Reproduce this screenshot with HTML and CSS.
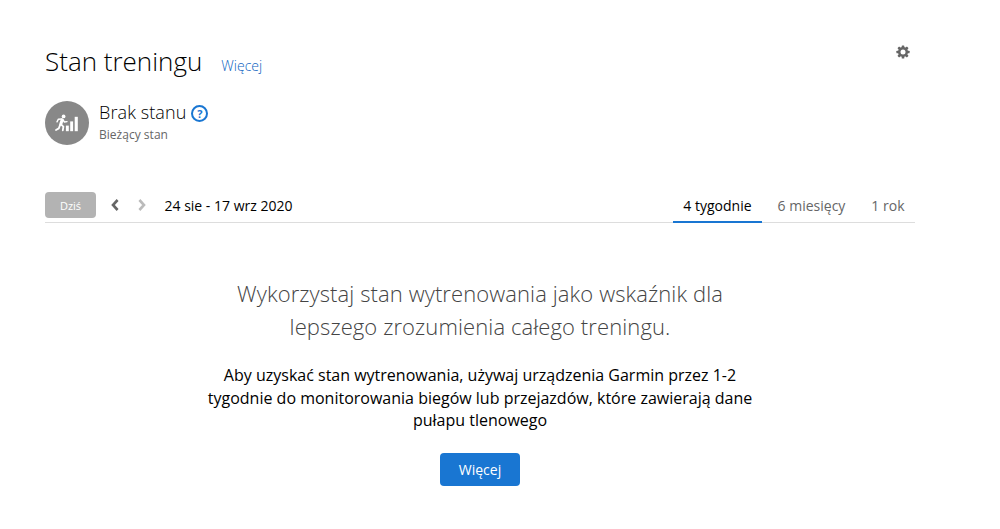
FILE: index.html
```
<!DOCTYPE html>
<html lang="pl">
	<head>
		<meta charset="UTF-8">
		<title>Stan treningu</title>
		<link rel="stylesheet" href="styles.css">
	</head>
	<body>
		<div class="page">
			<div class="header">
				<h1 class="title">Stan treningu</h1>
				<a href="#" class="more-link">Więcej</a>
				<svg class="gear" viewBox="0 0 14 14">
					<g fill="#666">
						<rect x="5.7" y="0.4" width="2.6" height="13.2" rx="0.6"/>
						<rect x="5.7" y="0.4" width="2.6" height="13.2" rx="0.6" transform="rotate(45 7 7)"/>
						<rect x="5.7" y="0.4" width="2.6" height="13.2" rx="0.6" transform="rotate(90 7 7)"/>
						<rect x="5.7" y="0.4" width="2.6" height="13.2" rx="0.6" transform="rotate(135 7 7)"/>
						<circle cx="7" cy="7" r="5"/>
					</g>
					<circle cx="7" cy="7" r="2.5" fill="#fff"/>
				</svg>
			</div>
			<div class="status">
				<svg class="status-icon" viewBox="0 0 44 44">
					<circle cx="22" cy="22" r="22" fill="#888"/>
					<circle cx="18.6" cy="15.4" r="1.9" fill="#fff"/>
					<g fill="none" stroke="#fff" stroke-linecap="round" stroke-linejoin="round">
						<path d="M17.2 18.8L15.8 23" stroke-width="3"/>
						<path d="M16.6 18L13.4 18.2L12 20.8" stroke-width="1.4"/>
						<path d="M18 18.8L19.4 21L22 20.6" stroke-width="1.4"/>
						<path d="M16 23.4L18.4 25.6L17.8 29.4" stroke-width="1.8"/>
						<path d="M15.2 23.6L13.8 27.4L11 29" stroke-width="1.8"/>
					</g>
					<g fill="#fff">
						<rect x="20.9" y="24.6" width="2.9" height="5.6"/>
						<rect x="25.2" y="20.4" width="2.9" height="9.8"/>
						<rect x="29.7" y="15.8" width="3.1" height="14.4"/>
					</g>
				</svg>
				<div class="status-text">
					<div class="status-name">
						<span>Brak stanu</span>
						<span class="help">?</span>
					</div>
					<div class="status-label">Bieżący stan</div>
				</div>
			</div>
			<div class="toolbar">
				<button type="button" class="today">Dziś</button>
				<svg class="arrow prev" viewBox="0 0 8 12"><path d="M6.6 1L2 6L6.6 11" fill="none" stroke="#666" stroke-width="2.6"/></svg>
				<svg class="arrow next" viewBox="0 0 8 12"><path d="M1.4 1L6 6L1.4 11" fill="none" stroke="#bbb" stroke-width="2.6"/></svg>
				<span class="range">24 sie - 17 wrz 2020</span>
				<div class="tabs">
					<a href="#" class="tab active">4 tygodnie</a>
					<a href="#" class="tab">6 miesięcy</a>
					<a href="#" class="tab">1 rok</a>
				</div>
			</div>
			<div class="empty">
				<h2 class="lead">Wykorzystaj stan wytrenowania jako wskaźnik dla<br>lepszego zrozumienia całego treningu.</h2>
				<p class="desc">Aby uzyskać stan wytrenowania, używaj urządzenia Garmin przez 1-2<br>tygodnie do monitorowania biegów lub przejazdów, które zawierają dane<br>pułapu tlenowego</p>
				<a href="#" class="btn">Więcej</a>
			</div>
		</div>
	</body>
</html>
```
FILE: styles.css
```
body{
	margin: 0;
	background: #fff;
	font-family: "Open Sans", "Noto Sans", sans-serif;
	color: #000;
}
a{
	text-decoration: none;
}
.page{
	width: 870px;
	padding: 42px 0 0 45px;
}
.header{
	display: flex;
	align-items: baseline;
	height: 59px;
}
.title{
	margin: 0;
	font-size: 26px;
	line-height: 38px;
	font-weight: 300;
}
.more-link{
	margin-left: 19px;
	font-size: 14px;
	font-weight: 300;
	color: #0a5fc0;
}
.gear{
	width: 14px;
	height: 14px;
	margin: 3px 5px 0 auto;
	align-self: flex-start;
}
.status{
	display: flex;
	height: 91px;
}
.status-icon{
	width: 44px;
	height: 44px;
	margin-right: 10px;
}
.status-name{
	display: flex;
	height: 24px;
	font-size: 18px;
	line-height: 22px;
	font-weight: 300;
	letter-spacing: .1px;
}
.help{
	box-sizing: border-box;
	width: 17px;
	height: 17px;
	margin: 4px 0 0 5px;
	border: 2px solid #1976d2;
	border-radius: 50%;
	font-size: 11px;
	line-height: 13px;
	font-weight: 700;
	letter-spacing: 0;
	text-align: center;
	color: #1976d2;
}
.status-label{
	font-size: 12px;
	line-height: 20px;
	letter-spacing: .02px;
	color: #666;
}
.toolbar{
	display: flex;
	box-sizing: border-box;
	height: 31px;
	border-bottom: 1px solid #ddd;
}
.today{
	width: 51px;
	height: 26px;
	padding: 0;
	border: 0;
	border-radius: 4px;
	background: #b3b3b3;
	color: #fff;
	font-family: inherit;
	font-size: 11px;
}
.arrow{
	width: 8px;
	height: 12px;
	margin-top: 7px;
}
.prev{
	margin-left: 15px;
}
.next{
	margin-left: 19px;
}
.range{
	margin-left: 18.5px;
	font-size: 14px;
	line-height: 27px;
}
.tabs{
	display: flex;
	margin-left: auto;
}
.tab{
	box-sizing: border-box;
	height: 31px;
	margin-left: 5px;
	padding: 0 10.5px;
	font-size: 14px;
	line-height: 27px;
	color: #666;
}
.active{
	border-bottom: 2px solid #1976d2;
	color: #000;
}
.empty{
	width: 560px;
	margin: 0 auto;
	padding-top: 54px;
	text-align: center;
}
.lead{
	margin: 0;
	font-size: 22px;
	line-height: 33px;
	font-weight: 300;
	letter-spacing: .1px;
	color: #444;
}
.desc{
	margin: 21px 0;
	font-size: 16px;
	line-height: 22.5px;
	white-space: nowrap;
}
.btn{
	display: inline-block;
	width: 80px;
	height: 33px;
	border-radius: 4px;
	background: #1976d2;
	color: #fff;
	font-size: 14px;
	line-height: 34px;
}
```
